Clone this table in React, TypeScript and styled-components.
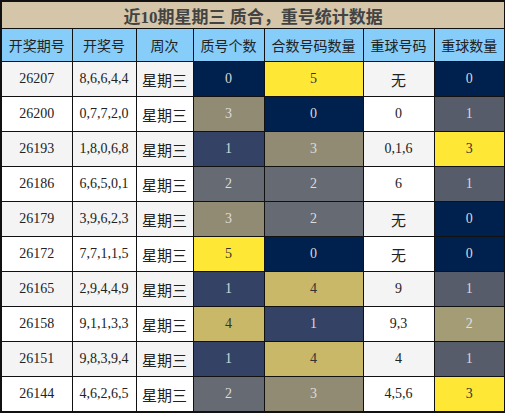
import React from 'react';
import styled, { createGlobalStyle } from 'styled-components';

const GlobalStyle = createGlobalStyle`
  body {
    margin: 0;
    background: #ffffff;
    font-family: "Liberation Serif", "Noto Sans CJK SC", serif;
  }
`;

type Tone = 'navy' | 'yellow' | 'stone' | 'blue' | 'gray' | 'khaki' | 'slate' | 'sand';

const tones: Record<Tone, { bg: string; fg: string }> = {
  navy: { bg: '#00214d', fg: '#d8d8d8' },
  yellow: { bg: '#ffe835', fg: '#333333' },
  stone: { bg: '#918b74', fg: '#dcdcdc' },
  blue: { bg: '#344266', fg: '#d8d8d8' },
  gray: { bg: '#666a72', fg: '#dcdcdc' },
  khaki: { bg: '#c9b867', fg: '#333333' },
  slate: { bg: '#575c6b', fg: '#d8d8d8' },
  sand: { bg: '#a39c75', fg: '#e0e0e0' },
};

interface Row {
  issue: string;
  nums: string;
  prime: [string, Tone];
  composite: [string, Tone];
  repeat: string;
  repeatCount: [string, Tone];
}

const rows: Row[] = [
  { issue: '26207', nums: '8,6,6,4,4', prime: ['0', 'navy'], composite: ['5', 'yellow'], repeat: '无', repeatCount: ['0', 'navy'] },
  { issue: '26200', nums: '0,7,7,2,0', prime: ['3', 'stone'], composite: ['0', 'navy'], repeat: '0', repeatCount: ['1', 'slate'] },
  { issue: '26193', nums: '1,8,0,6,8', prime: ['1', 'blue'], composite: ['3', 'stone'], repeat: '0,1,6', repeatCount: ['3', 'yellow'] },
  { issue: '26186', nums: '6,6,5,0,1', prime: ['2', 'gray'], composite: ['2', 'gray'], repeat: '6', repeatCount: ['1', 'slate'] },
  { issue: '26179', nums: '3,9,6,2,3', prime: ['3', 'stone'], composite: ['2', 'gray'], repeat: '无', repeatCount: ['0', 'navy'] },
  { issue: '26172', nums: '7,7,1,1,5', prime: ['5', 'yellow'], composite: ['0', 'navy'], repeat: '无', repeatCount: ['0', 'navy'] },
  { issue: '26165', nums: '2,9,4,4,9', prime: ['1', 'blue'], composite: ['4', 'khaki'], repeat: '9', repeatCount: ['1', 'slate'] },
  { issue: '26158', nums: '9,1,1,3,3', prime: ['4', 'khaki'], composite: ['1', 'blue'], repeat: '9,3', repeatCount: ['2', 'sand'] },
  { issue: '26151', nums: '9,8,3,9,4', prime: ['1', 'blue'], composite: ['4', 'khaki'], repeat: '4', repeatCount: ['1', 'slate'] },
  { issue: '26144', nums: '4,6,2,6,5', prime: ['2', 'gray'], composite: ['3', 'stone'], repeat: '4,5,6', repeatCount: ['3', 'yellow'] },
];

const widths = [71, 64, 57, 71, 99, 71, 71];
const headers = ['开奖期号', '开奖号', '周次', '质号个数', '合数号码数量', '重球号码', '重球数量'];

const Table = styled.table`
  width: 505px;
  border-collapse: collapse;
  table-layout: fixed;
  border: 2px solid #111;
`;

const TitleCell = styled.th`
  height: 26px;
  padding: 0;
  background: #d5c5a9;
  color: #434343;
  font-family: "Liberation Serif", "Noto Sans CJK SC", serif;
  font-size: 17px;
  font-weight: bold;
  text-align: center;
  border: 1px solid #111;
`;

const HeadCell = styled.th`
  height: 32px;
  padding: 0;
  background: #87cdf9;
  color: #222;
  font-family: "Noto Sans CJK SC", sans-serif;
  font-size: 14px;
  font-weight: normal;
  text-align: center;
  border: 1px solid #111;
`;

const DataRow = styled.tr<{ $shade: boolean }>`
  background: ${(p) => (p.$shade ? '#f4f4f4' : '#ffffff')};
`;

const Cell = styled.td<{ $tone?: Tone; $cjk?: boolean }>`
  height: 34px;
  padding: 0;
  text-align: center;
  border: 1px solid #111;
  font-family: ${(p) =>
    p.$cjk ? '"Noto Sans CJK SC", sans-serif' : '"Liberation Serif", "Noto Sans CJK SC", serif'};
  font-size: ${(p) => (p.$cjk ? '15px' : '14px')};
  color: ${(p) => (p.$tone ? tones[p.$tone].fg : '#222')};
  background: ${(p) => (p.$tone ? tones[p.$tone].bg : 'transparent')};
`;

export default function App() {
  return (
    <>
      <GlobalStyle />
      <Table>
        <colgroup>
          {widths.map((w, i) => (
            <col key={i} style={{ width: w }} />
          ))}
        </colgroup>
        <thead>
          <tr>
            <TitleCell colSpan={7}>近10期星期三 质合，重号统计数据</TitleCell>
          </tr>
          <tr>
            {headers.map((h) => (
              <HeadCell key={h}>{h}</HeadCell>
            ))}
          </tr>
        </thead>
        <tbody>
          {rows.map((r, i) => (
            <DataRow key={r.issue} $shade={i % 2 === 0}>
              <Cell>{r.issue}</Cell>
              <Cell>{r.nums}</Cell>
              <Cell $cjk>星期三</Cell>
              <Cell $tone={r.prime[1]}>{r.prime[0]}</Cell>
              <Cell $tone={r.composite[1]}>{r.composite[0]}</Cell>
              <Cell $cjk={r.repeat === '无'}>{r.repeat}</Cell>
              <Cell $tone={r.repeatCount[1]}>{r.repeatCount[0]}</Cell>
            </DataRow>
          ))}
        </tbody>
      </Table>
    </>
  );
}
